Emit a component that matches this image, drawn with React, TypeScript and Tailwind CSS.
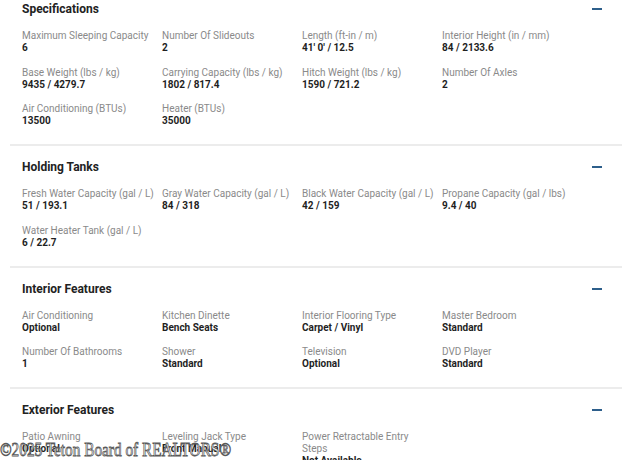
type Item = { label: string; value: string };
type Section = { title: string; items: Item[]; first?: boolean };

const sections: Section[] = [
  {
    title: "Specifications",
    first: true,
    items: [
      { label: "Maximum Sleeping Capacity", value: "6" },
      { label: "Number Of Slideouts", value: "2" },
      { label: "Length (ft-in / m)", value: "41' 0' / 12.5" },
      { label: "Interior Height (in / mm)", value: "84 / 2133.6" },
      { label: "Base Weight (lbs / kg)", value: "9435 / 4279.7" },
      { label: "Carrying Capacity (lbs / kg)", value: "1802 / 817.4" },
      { label: "Hitch Weight (lbs / kg)", value: "1590 / 721.2" },
      { label: "Number Of Axles", value: "2" },
      { label: "Air Conditioning (BTUs)", value: "13500" },
      { label: "Heater (BTUs)", value: "35000" },
    ],
  },
  {
    title: "Holding Tanks",
    items: [
      { label: "Fresh Water Capacity (gal / L)", value: "51 / 193.1" },
      { label: "Gray Water Capacity (gal / L)", value: "84 / 318" },
      { label: "Black Water Capacity (gal / L)", value: "42 / 159" },
      { label: "Propane Capacity (gal / lbs)", value: "9.4 / 40" },
      { label: "Water Heater Tank (gal / L)", value: "6 / 22.7" },
    ],
  },
  {
    title: "Interior Features",
    items: [
      { label: "Air Conditioning", value: "Optional" },
      { label: "Kitchen Dinette", value: "Bench Seats" },
      { label: "Interior Flooring Type", value: "Carpet / Vinyl" },
      { label: "Master Bedroom", value: "Standard" },
      { label: "Number Of Bathrooms", value: "1" },
      { label: "Shower", value: "Standard" },
      { label: "Television", value: "Optional" },
      { label: "DVD Player", value: "Standard" },
    ],
  },
  {
    title: "Exterior Features",
    items: [
      { label: "Patio Awning", value: "Optional" },
      { label: "Leveling Jack Type", value: "Front Manual" },
      { label: "Power Retractable Entry Steps", value: "Not Available" },
    ],
  },
];

const SpecSection = ({ s }: { s: Section }) => (
  <div className={`border-b-2 border-[#ececec] pl-3 pr-5 pb-[17px] ${s.first ? "pt-0" : "pt-3"}`}>
    <div className="flex items-center justify-between h-[18px]">
      <h3 className="text-[12px] font-bold text-[#222] leading-[18px]">{s.title}</h3>
      <span className="block w-[10px] h-[2px] bg-[#2d5f8b]" />
    </div>
    <div className="grid grid-cols-[repeat(4,134px)] gap-x-[6px] gap-y-[12.5px] mt-3">
      {s.items.map((it, i) => (
        <div key={i} className="text-[10px] leading-[12px]">
          <div className="text-[#8a8a8a]">{it.label}</div>
          <div className="font-bold text-[#1f1f1f]">{it.value}</div>
        </div>
      ))}
    </div>
  </div>
);

export default function App() {
  return (
    <div className="relative w-[640px] h-[460px] overflow-hidden bg-white font-['Roboto',sans-serif]">
      <div className="w-[612px] ml-[10px]">
        {sections.map((s, i) => (
          <SpecSection key={i} s={s} />
        ))}
      </div>
      <div className="absolute left-0 top-[440px] origin-left scale-x-[0.85] font-['Liberation_Serif',serif] text-[18px] leading-[20px] text-white [-webkit-text-stroke:0.8px_#5a5a5a] whitespace-nowrap">
        ©2025 Teton Board of REALTORS®
      </div>
    </div>
  );
}
